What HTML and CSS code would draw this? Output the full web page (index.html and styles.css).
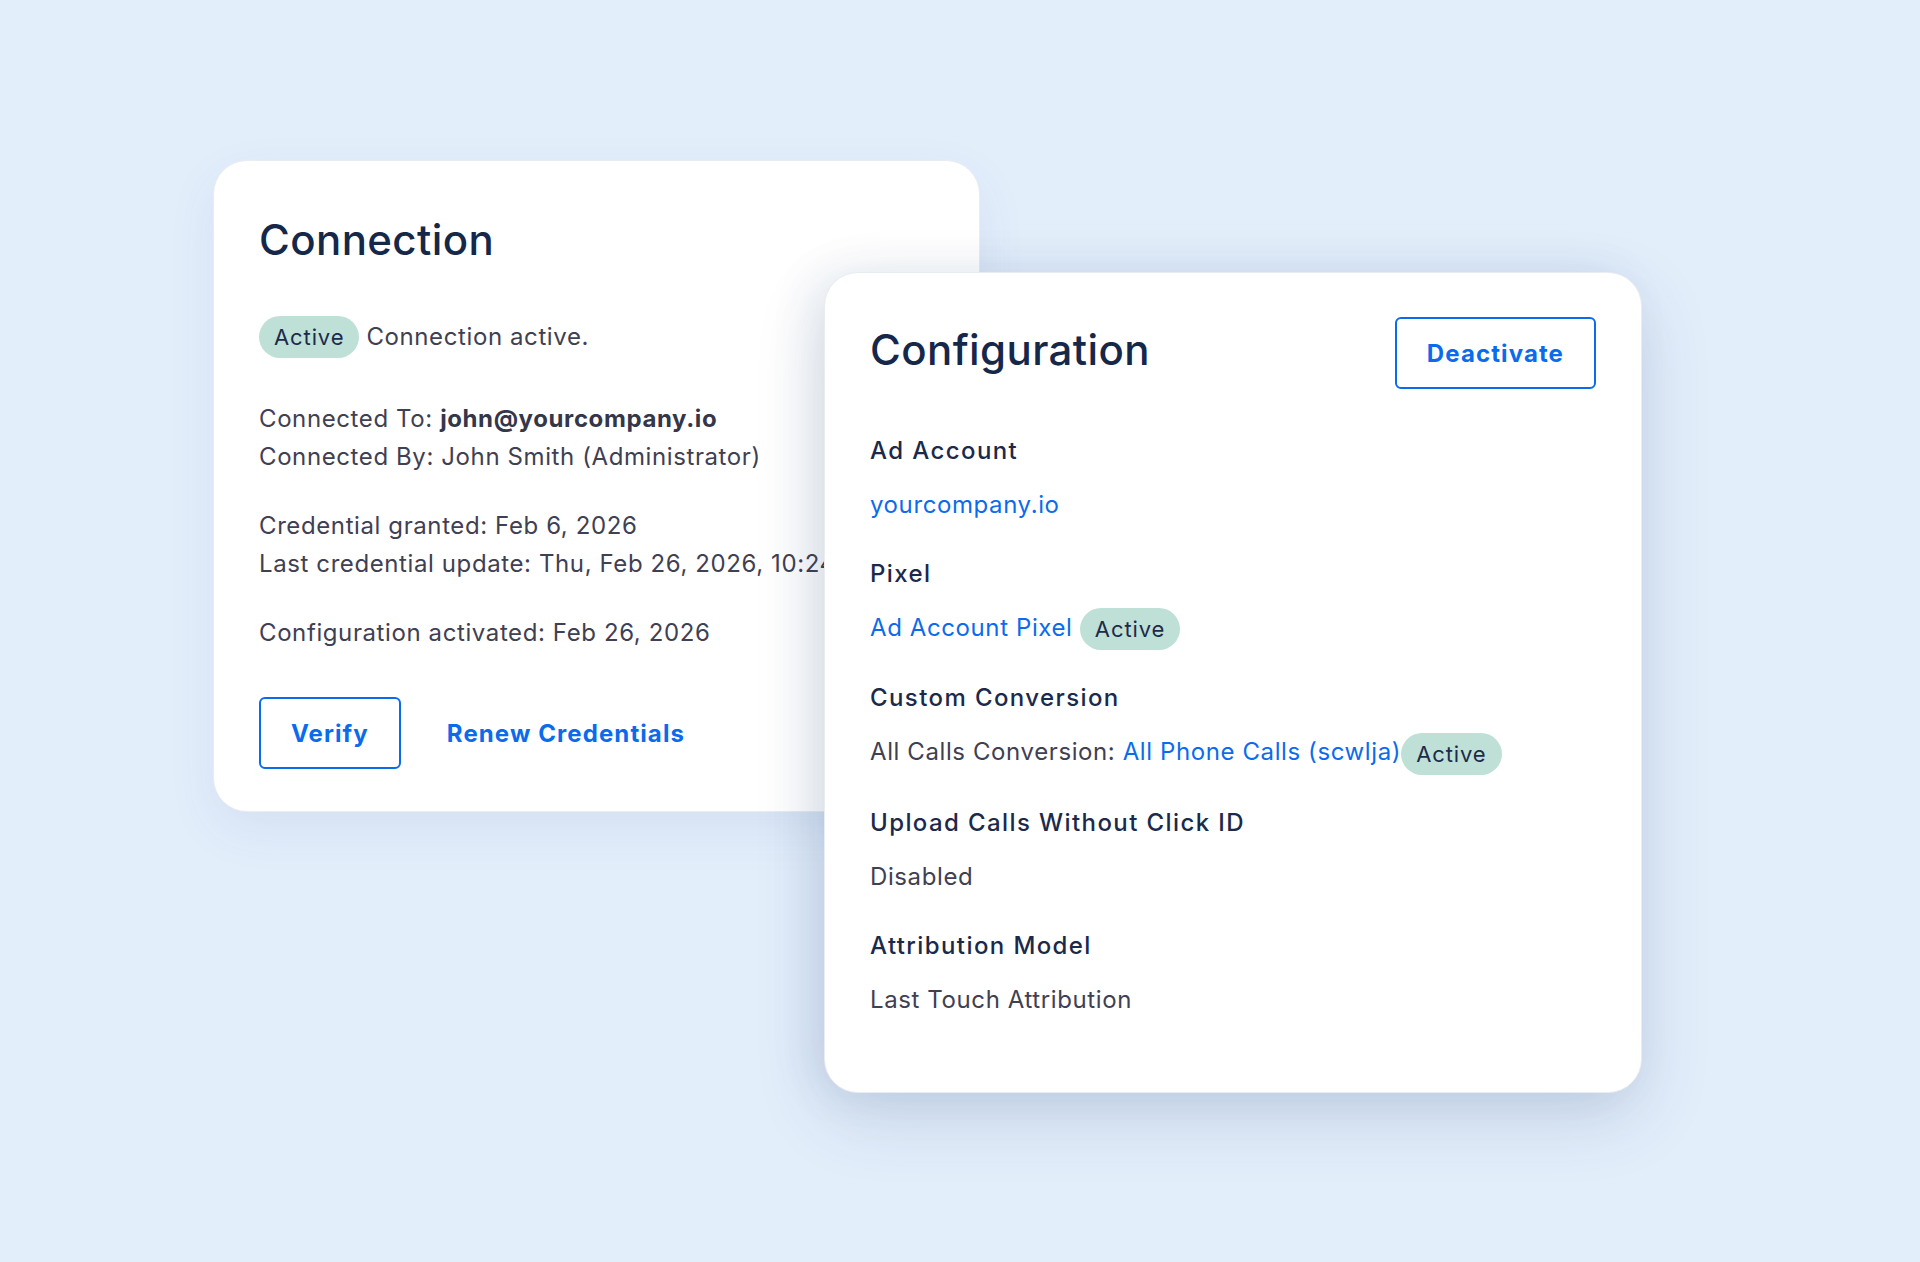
FILE: index.html
```html
<!DOCTYPE html>
<html lang="en">
<head>
    <meta charset="UTF-8">
    <meta name="viewport" content="width=device-width, initial-scale=1.0">
    <title>Integration Settings</title>
    <link rel="stylesheet" href="styles.css">
</head>
<body>
    <div class="stage">
        <!-- connection status card, sits behind -->
        <section class="card card-connection">
            <h2 class="card-title">Connection</h2>

            <div class="status-row">
                <span class="badge">Active</span>
                <span>Connection active.</span>
            </div>

            <div class="info-group">
                <p>Connected To: <strong>john@yourcompany.io</strong></p>
                <p>Connected By: John Smith (Administrator)</p>
            </div>
            <div class="info-group">
                <p>Credential granted: Feb 6, 2026</p>
                <p>Last credential update: Thu, Feb 26, 2026, 10:24 AM</p>
            </div>
            <div class="info-group">
                <p>Configuration activated: Feb 26, 2026</p>
            </div>

            <div class="actions">
                <button class="btn btn-outline">Verify</button>
                <button class="btn btn-link">Renew Credentials</button>
            </div>
        </section>

        <!-- configuration card, on top -->
        <section class="card card-config">
            <div class="card-header">
                <h2 class="card-title">Configuration</h2>
                <button class="btn btn-outline">Deactivate</button>
            </div>

            <div class="field">
                <div class="field-label">Ad Account</div>
                <div class="field-value"><a href="#">yourcompany.io</a></div>
            </div>
            <div class="field">
                <div class="field-label">Pixel</div>
                <div class="field-value"><a href="#">Ad Account Pixel</a> <span class="badge">Active</span></div>
            </div>
            <div class="field">
                <div class="field-label">Custom Conversion</div>
                <div class="field-value">All Calls Conversion: <a href="#">All Phone Calls (scwlja)</a><span class="badge">Active</span></div>
            </div>
            <div class="field">
                <div class="field-label">Upload Calls Without Click ID</div>
                <div class="field-value">Disabled</div>
            </div>
            <div class="field">
                <div class="field-label">Attribution Model</div>
                <div class="field-value">Last Touch Attribution</div>
            </div>
        </section>
    </div>
</body>
</html>
```

FILE: styles.css
```css
* {
    box-sizing: border-box;
}
body {
    margin: 0;
    font-family: Inter, "Noto Sans", Arial, sans-serif;
    background-color: #e3eefb;
    color: #3f4052;
    font-size: 24px;
    letter-spacing: 0.6px;
}
.stage {
    position: relative;
    width: 1920px;
    height: 1262px;
    overflow: hidden;
}
.card {
    position: absolute;
    background: #ffffff;
    border: 1px solid #e9ecf1;
    border-radius: 34px;
    padding: 0 45px;
}
.card-connection {
    left: 213px;
    top: 160px;
    width: 767px;
    height: 652px;
    padding-top: 54px;
    box-shadow: 0 18px 50px rgba(40, 80, 140, 0.08);
    overflow: hidden;
    white-space: nowrap;
}
.card-config {
    left: 824px;
    top: 272px;
    width: 818px;
    height: 821px;
    padding-top: 44px;
    box-shadow: 0 24px 70px rgba(30, 60, 110, 0.16), -14px 0 44px rgba(30, 60, 110, 0.08);
}
.card-title {
    margin: 0;
    font-size: 42px;
    line-height: 50px;
    font-weight: 500;
    color: #16284a;
    letter-spacing: 0.4px;
}
.status-row {
    display: flex;
    align-items: center;
    gap: 7px;
    margin-top: 51px;
    line-height: 32px;
}
.badge {
    display: inline-flex;
    align-items: center;
    height: 42px;
    padding: 0 15px;
    border-radius: 21px;
    background-color: #bfe0d6;
    color: #1c2b4b;
    font-size: 22px;
    letter-spacing: 0.9px;
    vertical-align: middle;
}
.info-group {
    margin-top: 42px;
}
.info-group + .info-group {
    margin-top: 31px;
}
.info-group p {
    margin: 0;
    line-height: 38px;
}
.info-group strong {
    color: #34364a;
    font-weight: 700;
}
.actions {
    display: flex;
    align-items: center;
    gap: 46px;
    margin-top: 45px;
}
.btn {
    font-family: inherit;
    font-size: 24px;
    font-weight: 700;
    letter-spacing: 1.1px;
    color: #0b6bed;
    background: none;
    cursor: pointer;
}
.btn-outline {
    height: 72px;
    padding: 0 30px;
    border: 2px solid #0b6bed;
    border-radius: 6px;
    background-color: #ffffff;
}
.btn-link {
    border: none;
    padding: 0;
}
.card-header {
    display: flex;
    justify-content: space-between;
    align-items: flex-start;
}
.card-header .card-title {
    margin-top: 8px;
}
.field {
    margin-top: 37px;
}
.card-header + .field {
    margin-top: 46px;
}
.field-label {
    font-weight: 500;
    color: #1b2a4a;
    line-height: 32px;
    letter-spacing: 1.4px;
}
.field-value {
    margin-top: 22px;
    line-height: 32px;
}
.field-value .badge {
    margin: -5px 0;
}
.field-value a {
    color: #0b6bed;
    text-decoration: none;
}
```
